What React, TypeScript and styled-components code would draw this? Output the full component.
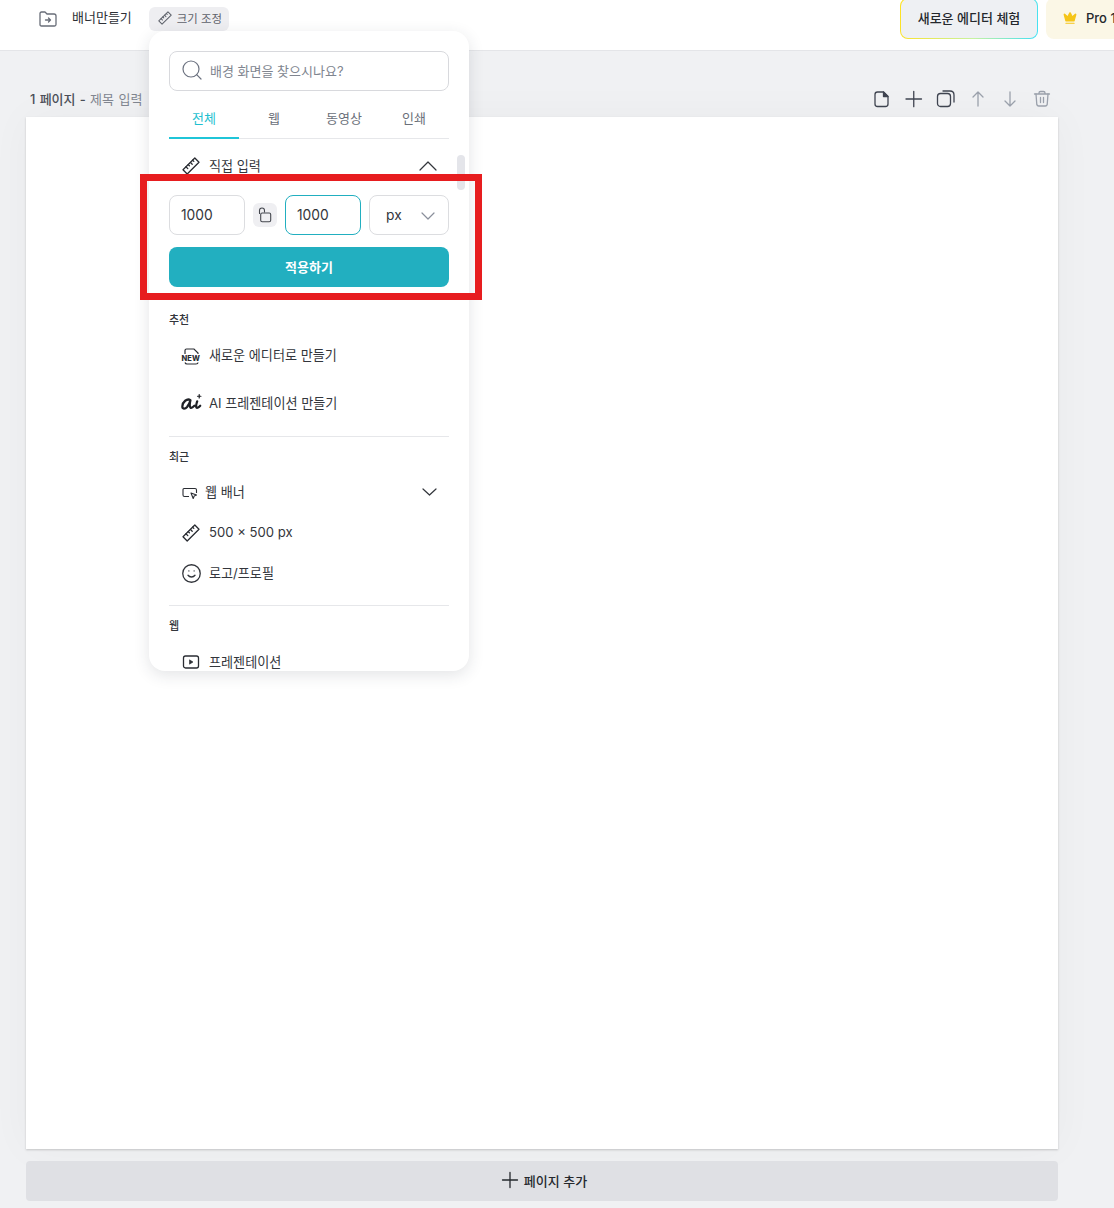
import styled, {createGlobalStyle} from "styled-components";
import {Crown, Search, Smile} from "lucide-react";

const GlobalStyle = createGlobalStyle`
    html, body {
        margin: 0;
        height: 100%;
        overflow: hidden;
    }
    body {
        font-family: Inter, "Noto Sans CJK KR", sans-serif;
        color: #25282d;
    }
    * {
        box-sizing: border-box;
    }
`;

const Page = styled.div`
    position: relative;
    width: 1114px;
    height: 1208px;
    overflow: hidden;
    background: #f0f1f3;
`;

const Header = styled.header`
    height: 51px;
    display: flex;
    align-items: flex-start;
    background: #fff;
    border-bottom: 1px solid #e4e5e8;
    padding-left: 38px;
`;
const FolderButton = styled.span`
    display: flex;
    margin-top: 9px;
    color: #686d78;
`;
const FileName = styled.span`
    margin: 8px 0 0 14px;
    font-size: 13px;
    line-height: 18px;
    color: #2d3036;
`;
const ResizeChip = styled.span`
    display: flex;
    align-items: center;
    gap: 5px;
    width: 80px;
    height: 24px;
    margin: 7px 0 0 17px;
    padding: 0 0 2px 9px;
    border-radius: 6px;
    background: #eeeef1;
    font-size: 11.4px;
    color: #5e626b;
    white-space: nowrap;
`;
const HeaderRight = styled.div`
    margin-left: auto;
    display: flex;
    gap: 8px;
    margin-top: -2px;
    margin-right: -60px;
`;
const NewEditorButton = styled.button`
    width: 138px;
    height: 41px;
    padding: 0 0 2px;
    border: 1px solid transparent;
    border-radius: 8px;
    background: linear-gradient(#eef0f3, #eef0f3) padding-box,
        linear-gradient(100deg, #ffe11f 0%, #c8f2a0 55%, #3fe0f5 100%) border-box;
    font: 500 13px Inter, "Noto Sans CJK KR", sans-serif;
    color: #25282d;
`;
const ProButton = styled.button`
    display: flex;
    align-items: center;
    gap: 9px;
    width: 128px;
    height: 41px;
    padding: 0 0 2px 17px;
    border: 0;
    border-radius: 8px;
    background: #fbf7e6;
    font: 500 13px Inter, "Noto Sans CJK KR", sans-serif;
    color: #25282d;
    white-space: nowrap;
`;

const Workspace = styled.main`
    width: 1032px;
    margin-left: 26px;
`;
const PageBar = styled.div`
    height: 66px;
    display: flex;
    align-items: flex-end;
    justify-content: space-between;
    padding: 0 6px 8px 4px;
`;
const PageTitle = styled.div`
    font-size: 13px;
    line-height: 18px;
    padding-bottom: 1px;
    font-weight: 500;
    word-spacing: 0.8px;
    color: #4a4e57;
    span {
        font-weight: 400;
        color: #80858f;
    }
`;
const PageTools = styled.div`
    display: flex;
    gap: 12px;
`;
const ToolIcon = styled.svg<{$muted?: boolean}>`
    display: block;
    width: 20px;
    height: 20px;
    fill: none;
    stroke: ${(props) => (props.$muted ? "#9aa0ab" : "#3f4450")};
    stroke-width: 1.3;
    stroke-linecap: round;
    stroke-linejoin: round;
`;
const Canvas = styled.div`
    height: 1032px;
    background: #fff;
    box-shadow: 0 1px 2px rgba(0, 0, 0, 0.18), 0 0 40px rgba(30, 35, 50, 0.035);
`;
const AddPage = styled.button`
    width: 100%;
    height: 40px;
    margin-top: 12px;
    display: flex;
    align-items: center;
    justify-content: center;
    gap: 4px;
    padding: 0 0 2px 3px;
    border: 0;
    border-radius: 4px;
    background: #dfe0e4;
    font: 500 13px Inter, "Noto Sans CJK KR", sans-serif;
    color: #25282d;
`;
const AddIcon = styled(ToolIcon)`
    stroke: #25282d;
`;

const Popover = styled.div`
    position: absolute;
    left: 149px;
    top: 31px;
    width: 320px;
    height: 640px;
    overflow: hidden;
    border-radius: 16px;
    background: #fff;
    box-shadow: 0 4px 16px rgba(40, 45, 60, 0.13);
    padding: 20px 20px 0;
`;
const SearchBox = styled.div`
    height: 40px;
    display: flex;
    align-items: center;
    gap: 6px;
    padding: 0 0 2px 10px;
    border: 1px solid #d8d9dd;
    border-radius: 8px;
    font-size: 13px;
    color: #80858f;
    svg {
        color: #6c7280;
    }
`;
const Tabs = styled.div`
    height: 40px;
    margin-top: 8px;
    display: grid;
    grid-template-columns: repeat(4, 70px);
    border-bottom: 1px solid #e6e7ea;
`;
const Tab = styled.div<{$active?: boolean}>`
    height: 40px;
    display: flex;
    align-items: center;
    justify-content: center;
    padding-bottom: 2px;
    font-size: 13px;
    color: ${(props) => (props.$active ? "#1fbfd0" : "#6a6f79")};
    border-bottom: 2px solid ${(props) => (props.$active ? "#1fc5d8" : "transparent")};
`;
const ScrollThumb = styled.div`
    position: absolute;
    left: 308px;
    top: 124px;
    width: 8px;
    height: 35px;
    border-radius: 4px;
    background: #e4e5ea;
`;
const Row = styled.div<{$height?: number, $top?: number, $gap?: number}>`
    height: ${(props) => props.$height ?? 40}px;
    margin-top: ${(props) => props.$top ?? 0}px;
    display: flex;
    align-items: center;
    gap: ${(props) => props.$gap ?? 9}px;
    padding: 0 12px 2px 13px;
    font-size: 13.1px;
    color: #33363c;
    svg {
        flex: none;
        margin-top: 2px;
    }
`;
const RowChevron = styled.svg<{$tint?: string}>`
    margin-left: auto;
    margin-top: 3px;
    fill: none;
    stroke: ${(props) => props.$tint ?? "#33363c"};
    stroke-width: 1.2;
    stroke-linecap: round;
    stroke-linejoin: round;
`;
const SizeRow = styled.div`
    margin-top: 2px;
    display: flex;
    align-items: center;
`;
const SizeInput = styled.div<{$focused?: boolean}>`
    width: 76px;
    height: 40px;
    display: flex;
    align-items: center;
    padding: 0 0 1px 11px;
    border: 1px solid ${(props) => (props.$focused ? "#21afc0" : "#dcdde0")};
    border-radius: 8px;
    font-size: 13.8px;
    color: #33363c;
`;
const LockButton = styled.span`
    width: 24px;
    height: 24px;
    margin: 0 8px;
    display: flex;
    align-items: center;
    justify-content: center;
    border-radius: 6px;
    background: #efeff2;
`;
const UnitSelect = styled.div`
    width: 80px;
    height: 40px;
    margin-left: 8px;
    display: flex;
    align-items: center;
    justify-content: space-between;
    padding: 0 13px 1px 16px;
    border: 1px solid #dcdde0;
    border-radius: 8px;
    font-size: 13.8px;
    color: #33363c;
`;
const ApplyButton = styled.button`
    width: 100%;
    height: 40px;
    margin-top: 12px;
    padding: 0 0 2px;
    border: 0;
    border-radius: 8px;
    background: #22afc0;
    font: 600 13px Inter, "Noto Sans CJK KR", sans-serif;
    color: #fff;
`;
const SectionLabel = styled.div<{$top: number}>`
    margin-top: ${(props) => props.$top}px;
    font-size: 11px;
    line-height: 16px;
    font-weight: 500;
    color: #33363c;
`;
const Divider = styled.hr<{$top: number}>`
    margin: ${(props) => props.$top}px 0 0;
    border: 0;
    border-top: 1px solid #e6e7ea;
`;
const Highlight = styled.div`
    position: absolute;
    left: 140px;
    top: 174px;
    width: 342px;
    height: 126px;
    border: 7px solid #e71d1f;
    pointer-events: none;
`;

const RulerIcon = ({size = 18, color = "#2a2d33"}: {size?: number, color?: string}) => (
    <svg width={size} height={size} viewBox="0 0 18 18" fill="none" stroke={color} strokeWidth="1.3" strokeLinejoin="round">
        <path d="M1 12.800 12.800 1 17 5.200 5.200 17z" />
        <path d="M4 9.800 5.800 11.600M6.200 7.600 7.400 8.800M8.400 5.400 10.200 7.200M10.600 3.200 11.800 4.400" strokeLinecap="round" />
    </svg>
);

const NewBadgeIcon = () => (
    <svg width="18" height="18" viewBox="0 0 18 18" fill="none" overflow="visible">
        <path d="M3 8V4.500Q3 3 4.500 3H12l4 4v1M3 16.500Q3.500 18 5 18h9q2 0 2-1.500" stroke="#2a2d33" strokeWidth="1.200" />
        <text x="8.700" y="14.500" textAnchor="middle" fontSize="7.500" fontWeight="800" fill="#2a2d33" fontFamily="Inter, sans-serif">NEW</text>
    </svg>
);

const AiIcon = () => (
    <svg width="18" height="18" viewBox="1.500 3 16 16" fill="none" stroke="#1f2126" strokeWidth="2" strokeLinecap="round" overflow="visible">
        <path d="M9 8.500C6 6.500 2 10 1.800 14c-.1 2.500 2.500 2.500 4.200.5 1.200-1.500 2.500-4 3-6-.6 2.500-1.200 5 0 6.500 1 .8 2.500-.5 3.500-1.500" />
        <path d="M15 9.500c-.6 2-1.500 4-.8 5.300.7 1 2.300 0 3.500-1.300" />
        <path d="M16.800 3.500v3M15.300 5h3" strokeWidth="1.100" />
    </svg>
);

const WebBannerIcon = () => (
    <svg width="16" height="16" viewBox="0 0 16 16" fill="none" stroke="#2a2d33" strokeWidth="1.100" strokeLinejoin="round">
        <path d="M7 12.500H2.500Q1 12.500 1 11V5.500Q1 4.500 2 4.500H13Q14.500 4.500 14.500 6V9" />
        <path d="m9 9 5.500 2-2.300 1-1 2.500z" />
    </svg>
);

const PlayBoxIcon = () => (
    <svg width="18" height="18" viewBox="0 0 18 18" fill="none" stroke="#2a2d33" strokeWidth="1.300">
        <rect x="1.500" y="3" width="15" height="12" rx="2" />
        <path d="M7.500 6.800v4.400L11 9z" fill="#2a2d33" strokeWidth="0.600" />
    </svg>
);

const ChevronIcon = ({width, up, tint}: {width: number, up?: boolean, tint?: string}) => {
    const depth = Math.round(width * 0.42);
    return (
        <RowChevron $tint={tint} width={width} height={depth + 2} viewBox={`0 0 ${width} ${depth + 2}`}>
            <path d={up ? `M1 ${depth + 1} ${width / 2} 1 ${width - 1} ${depth + 1}` : `M1 1 ${width / 2} ${depth + 1} ${width - 1} 1`} />
        </RowChevron>
    );
};

const App = () => {
    return (
        <Page>
            <GlobalStyle />
            <Header>
                <FolderButton>
                    <svg width="20" height="20" viewBox="0 0 20 20" fill="none" stroke="currentColor" strokeWidth="1.300" strokeLinecap="round" strokeLinejoin="round">
                        <path d="M2 4.500Q2 3 3.500 3H7l2 2h7Q18 5 18 7v8.500q0 1.500-1.500 1.500h-13Q2 17 2 15.500z" />
                        <path d="M7.500 11h5M10.500 9l2 2-2 2" />
                    </svg>
                </FolderButton>
                <FileName>배너만들기</FileName>
                <ResizeChip>
                    <RulerIcon size={14} color="#5e626b" />
                    크기 조정
                </ResizeChip>
                <HeaderRight>
                    <NewEditorButton>새로운 에디터 체험</NewEditorButton>
                    <ProButton><Crown size={14} fill="#f5c518" color="#f5c518" />Pro 1개월</ProButton>
                </HeaderRight>
            </Header>
            <Workspace>
                <PageBar>
                    <PageTitle>1 페이지 - <span>제목 입력</span></PageTitle>
                    <PageTools>
                        <ToolIcon viewBox="0 0 20 20">
                            <path d="M5.500 3H11.500L16 7.500V15Q16 17.500 13.500 17.500H5.500Q3 17.500 3 15V5.500Q3 3 5.500 3z" />
                            <path d="M11.500 3 16 7.500H11.500z" fill="#3f4450" />
                        </ToolIcon>
                        <ToolIcon viewBox="0 0 20 20"><path d="M2 10H17.500M9.750 2.300V17.700" /></ToolIcon>
                        <ToolIcon viewBox="0 0 20 20">
                            <rect x="1.500" y="4.500" width="13" height="13" rx="3" />
                            <path d="M7 2h7q4 0 4 4v7" />
                        </ToolIcon>
                        <ToolIcon $muted viewBox="0 0 20 20"><path d="M10 3V17M5 8l5-5 5 5" /></ToolIcon>
                        <ToolIcon $muted viewBox="0 0 20 20"><path d="M10 3V17M5 12l5 5 5-5" /></ToolIcon>
                        <ToolIcon $muted viewBox="0 0 20 20">
                            <path d="M2.500 5h15M7 5V4a1.500 1.500 0 0 1 1.500-1.500h3A1.500 1.500 0 0 1 13 4v1" />
                            <path d="M4 5l.8 10.500a2 2 0 0 0 2 1.500h6.400a2 2 0 0 0 2-1.500L16 5M8.500 8.500v5M11.500 8.500v5" />
                        </ToolIcon>
                    </PageTools>
                </PageBar>
                <Canvas />
                <AddPage>
                    <AddIcon viewBox="0 0 20 20"><path d="M2.500 10H17.500M10 2.500V17.500" /></AddIcon>
                    페이지 추가
                </AddPage>
            </Workspace>
            <Popover>
                <SearchBox><Search size={24} strokeWidth={1.2} />배경 화면을 찾으시나요?</SearchBox>
                <Tabs>
                    <Tab $active>전체</Tab>
                    <Tab>웹</Tab>
                    <Tab>동영상</Tab>
                    <Tab>인쇄</Tab>
                </Tabs>
                <ScrollThumb />
                <Row $height={54}>
                    <RulerIcon />직접 입력
                    <ChevronIcon width={18} up />
                </Row>
                <SizeRow>
                    <SizeInput>1000</SizeInput>
                    <LockButton>
                        <svg width="16" height="16" viewBox="0 0 16 16" fill="none" stroke="#44474e" strokeWidth="1.100" strokeLinecap="round">
                            <rect x="3.700" y="6" width="10" height="8.700" rx="1.500" />
                            <path d="M2.500 6.500V3.500a2.500 2.500 0 0 1 5 0V5" />
                        </svg>
                    </LockButton>
                    <SizeInput $focused>1000</SizeInput>
                    <UnitSelect>px<ChevronIcon width={14} tint="#8a8f9b" /></UnitSelect>
                </SizeRow>
                <ApplyButton>적용하기</ApplyButton>
                <SectionLabel $top={25}>추천</SectionLabel>
                <Row $height={48} $top={3}><NewBadgeIcon />새로운 에디터로 만들기</Row>
                <Row $height={48}><AiIcon />AI 프레젠테이션 만들기</Row>
                <Divider $top={9} />
                <SectionLabel $top={12}>최근</SectionLabel>
                <Row $height={42} $top={6} $gap={7}>
                    <WebBannerIcon />웹 배너
                    <ChevronIcon width={15} />
                </Row>
                <Row><RulerIcon />500 × 500 px</Row>
                <Row><Smile size={21} strokeWidth={1.5} style={{marginLeft: -1.5, marginRight: -1.5}} />로고/프로필</Row>
                <Divider $top={12} />
                <SectionLabel $top={12}>웹</SectionLabel>
                <Row $height={42} $top={7}><PlayBoxIcon />프레젠테이션</Row>
            </Popover>
            <Highlight />
        </Page>
    );
};

export default App;
